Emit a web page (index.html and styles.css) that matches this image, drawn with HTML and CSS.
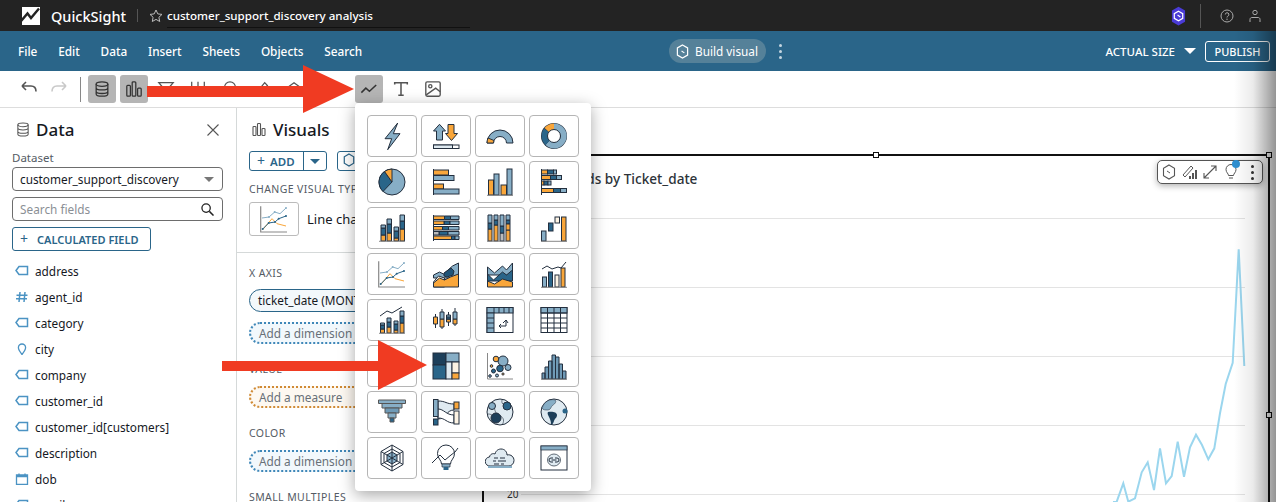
FILE: index.html
```html
<!DOCTYPE html>
<html lang="en">
<head>
  <meta charset="UTF-8">
  <title>QuickSight - customer_support_discovery analysis</title>
  <link rel="stylesheet" href="styles.css">
</head>
<body>
  <header class="top-bar">
    <svg class="logo" viewBox="0 0 18 18"><path fill="#fff" d="M0 0h18v18H0z"/><path fill="none" stroke="#232323" stroke-width="2.400" d="M-1 14l6.500-7.500L9 11l8-9.500"/></svg>
    <span class="brand">QuickSight</span>
    <span class="top-divider"></span>
    <svg class="star" viewBox="0 0 14 14"><path fill="none" stroke="#bbb" d="M7 1l1.800 3.900 4.200.5-3.100 2.900.8 4.200L7 10.400l-3.700 2.100.8-4.200L1 5.400l4.200-.5z"/></svg>
    <span class="analysis-name">customer_support_discovery analysis</span>
    <span class="top-right">
      <svg class="q-badge" viewBox="0 0 16 20"><path fill="#4a3bd6" d="M8 0l7 4v12l-7 4-7-4V4z"/><path fill="none" stroke="#fff" stroke-width="1.300" d="M8 5l4.500 2.500v5L8 15l-4.500-2.500v-5z"/><path stroke="#fff" stroke-width="1.200" d="M7 9l3 2"/></svg>
      <span class="top-divider tall"></span>
      <svg class="top-icon" viewBox="0 0 14 14"><circle cx="7" cy="7" r="6" fill="none" stroke="#aaa"/><path fill="none" stroke="#aaa" d="M5.300 5.500a1.800 1.800 0 1 1 2.500 1.700c-.6.300-.8.600-.8 1.300"/><circle cx="7" cy="10.300" r=".7" fill="#aaa"/></svg>
      <svg class="top-icon" viewBox="0 0 14 14"><circle cx="7" cy="3.500" r="2.200" fill="none" stroke="#aaa"/><path fill="none" stroke="#aaa" d="M2 13v-2.500c0-1.500 1-2 2-2h6c1 0 2 .5 2 2V13"/></svg>
    </span>
  </header>

  <nav class="menu-bar">
    <span class="menu-item">File</span>
    <span class="menu-item">Edit</span>
    <span class="menu-item">Data</span>
    <span class="menu-item">Insert</span>
    <span class="menu-item">Sheets</span>
    <span class="menu-item">Objects</span>
    <span class="menu-item">Search</span>
    <span class="build-pill">
      <svg viewBox="0 0 14 16"><path fill="none" stroke="#fff" stroke-width="1.300" d="M7 1l5.500 3.200v7.600L7 15l-5.500-3.200V4.200z"/><path stroke="#fff" stroke-width="1.200" d="M6 7.500l3 2"/></svg>
      Build visual
    </span>
    <span class="kebab"><i></i><i></i><i></i></span>
    <span class="size-label">ACTUAL SIZE</span>
    <span class="caret-white"></span>
    <span class="publish">PUBLISH</span>
  </nav>

  <div class="toolbar">
    <svg class="tool first" viewBox="0 0 24 24"><path fill="none" stroke="#555" stroke-width="1.600" d="M6 9h9c3.500 0 5 2.200 5 5.500M6 9l4-4M6 9l4 4"/></svg>
    <svg class="tool" viewBox="0 0 24 24"><path fill="none" stroke="#c9c9c9" stroke-width="1.600" d="M18 9H9c-3.500 0-5 2.200-5 5.500M18 9l-4-4M18 9l-4 4"/></svg>
    <span class="tool-divider"></span>
    <span class="tool-btn on"><svg viewBox="0 0 20 20"><g fill="none" stroke="#333" stroke-width="1.400"><ellipse cx="10" cy="4.500" rx="6.500" ry="2.500"/><path d="M3.500 4.500v11c0 1.400 3 2.500 6.500 2.500s6.500-1.100 6.500-2.500v-11M3.500 8.500c0 1.400 3 2.500 6.500 2.500s6.500-1.100 6.500-2.500M3.500 12.500c0 1.400 3 2.500 6.500 2.500s6.500-1.100 6.500-2.500"/></g></svg></span>
    <span class="tool-btn on"><svg viewBox="0 0 20 20"><g fill="none" stroke="#333" stroke-width="1.400"><rect x="2" y="6" width="4" height="12" rx="1"/><rect x="8" y="2" width="4" height="16" rx="1"/><rect x="14" y="9" width="4" height="9" rx="1"/></g></svg></span>
    <span class="tool-btn"><svg viewBox="0 0 20 20"><path fill="none" stroke="#555" stroke-width="1.400" d="M2 3h16l-6 7v7l-4-2v-5z"/></svg></span>
    <span class="tool-btn"><svg viewBox="0 0 20 20"><path stroke="#555" stroke-width="1.400" d="M3 2v14M10 2v14M17 2v14"/></svg></span>
    <span class="tool-btn"><svg viewBox="0 0 20 20"><circle cx="10" cy="8" r="6" fill="none" stroke="#555" stroke-width="1.400"/><path fill="none" stroke="#555" stroke-width="1.400" d="M7 15h6v3H7z"/></svg></span>
    <span class="tool-btn"><svg viewBox="0 0 20 20"><path fill="none" stroke="#555" stroke-width="1.400" d="M4 14L13 3l3 3-9 10zM3 18h14"/></svg></span>
    <span class="tool-btn"><svg viewBox="0 0 20 20"><path fill="none" stroke="#555" stroke-width="1.400" d="M10 3l8 6-8 6-8-6z"/></svg></span>
    <span class="tool-btn on line-tool"><svg viewBox="0 0 20 20"><path fill="none" stroke="#333" stroke-width="1.700" d="M1.500 14l5-5 4 3.500 7.500-7"/></svg></span>
    <span class="tool-btn"><svg viewBox="0 0 20 20"><path fill="none" stroke="#555" stroke-width="1.700" d="M3 5V3h14v2M10 3v14M7 17h6"/></svg></span>
    <span class="tool-btn"><svg viewBox="0 0 20 20"><g fill="none" stroke="#555" stroke-width="1.500"><rect x="2" y="2" width="16" height="16" rx="1.500"/><circle cx="7" cy="7" r="1.800"/><path d="M2.500 16.500L13 9l5 4"/></g></svg></span>
  </div>

  <main class="workspace">
    <aside class="data-panel">
      <div class="panel-head">
        <svg class="head-icon" viewBox="0 0 14 16"><g fill="none" stroke="#555" stroke-width="1.100"><ellipse cx="7" cy="3" rx="5.500" ry="2"/><path d="M1.500 3v10c0 1.100 2.500 2 5.500 2s5.500-.9 5.500-2V3M1.500 6.500c0 1.100 2.500 2 5.500 2s5.500-.9 5.500-2M1.500 10c0 1.100 2.500 2 5.500 2s5.500-.9 5.500-2"/></g></svg>
        <h2>Data</h2>
        <svg class="close" viewBox="0 0 12 12"><path stroke="#555" stroke-width="1.100" d="M.5.5l11 11M11.500.5l-11 11"/></svg>
      </div>
      <label class="field-label">Dataset</label>
      <div class="select-box">customer_support_discovery<span class="caret-grey"></span></div>
      <div class="search-box">Search fields
        <svg viewBox="0 0 14 14"><circle cx="5.500" cy="5.500" r="4.500" fill="none" stroke="#222" stroke-width="1.400"/><path stroke="#222" stroke-width="1.600" d="M9 9l4.500 4.500"/></svg>
      </div>
      <div class="calc-btn"><span class="plus">+</span>CALCULATED FIELD</div>
      <ul class="field-list">
        <li><svg viewBox="0 0 14 12"><use href="#tag-icon"/></svg>address</li>
        <li><svg viewBox="0 0 14 12"><use href="#hash-icon"/></svg>agent_id</li>
        <li><svg viewBox="0 0 14 12"><use href="#tag-icon"/></svg>category</li>
        <li><svg viewBox="0 0 14 12"><use href="#pin-icon"/></svg>city</li>
        <li><svg viewBox="0 0 14 12"><use href="#tag-icon"/></svg>company</li>
        <li><svg viewBox="0 0 14 12"><use href="#tag-icon"/></svg>customer_id</li>
        <li><svg viewBox="0 0 14 12"><use href="#tag-icon"/></svg>customer_id[customers]</li>
        <li><svg viewBox="0 0 14 12"><use href="#tag-icon"/></svg>description</li>
        <li><svg viewBox="0 0 14 12"><use href="#cal-icon"/></svg>dob</li>
        <li><svg viewBox="0 0 14 12"><use href="#tag-icon"/></svg>email</li>
      </ul>
    </aside>

    <section class="visuals-panel">
      <div class="panel-head visuals-head">
        <svg class="head-icon" viewBox="0 0 14 14"><g fill="none" stroke="#555" stroke-width="1.100"><rect x="1" y="4" width="3" height="9" rx=".8"/><rect x="5.500" y="1" width="3" height="12" rx=".8"/><rect x="10" y="6" width="3" height="7" rx=".8"/></g></svg>
        <h2>Visuals</h2>
      </div>
      <div class="add-row">
        <span class="add-btn"><span class="add-main"><span class="plus">+</span>ADD</span><span class="add-drop"><i></i></span></span>
        <span class="q-btn"><svg viewBox="0 0 14 16"><path fill="none" stroke="#2a6589" stroke-width="1.400" d="M7 1l5.500 3.200v7.600L7 15l-5.500-3.200V4.200z"/></svg></span>
      </div>
      <div class="well-label change-label">CHANGE VISUAL TYPE</div>
      <div class="type-row">
        <span class="type-thumb"><svg viewBox="0 0 30 30"><use href="#line-chart-icon"/></svg></span>
        <span class="type-name">Line chart</span>
      </div>
      <div class="well-group">
        <div class="well-label">X AXIS</div>
        <div class="pill solid">ticket_date (MONTH)</div>
        <div class="pill dotted">Add a dimension</div>
        <div class="well-label">VALUE</div>
        <div class="pill dotted measure">Add a measure</div>
        <div class="well-label">COLOR</div>
        <div class="pill dotted">Add a dimension</div>
        <div class="well-label">SMALL MULTIPLES</div>
      </div>
    </section>

    <section class="canvas">
      <div class="visual-frame">
        <span class="handle h-top"></span>
        <span class="handle h-corner"></span>
        <span class="handle h-right"></span>
        <h3 class="visual-title">Count of Records by Ticket_date</h3>
        <div class="visual-tools">
          <svg viewBox="0 0 14 16"><path fill="none" stroke="#555" stroke-width="1.100" d="M7 1l5.500 3.200v7.600L7 15l-5.500-3.200V4.200z"/><path stroke="#555" d="M5 7l3 2"/></svg>
          <svg viewBox="0 0 16 16"><path fill="none" stroke="#555" d="M1 11L9 2l2 2-8 9z"/><path fill="#555" d="M7 15v-3h2v3zM10 15V9h2v6zM13 15V6h2v9z"/></svg>
          <svg viewBox="0 0 16 16"><path fill="none" stroke="#555" stroke-width="1.100" d="M2 14L14 2M9 2h5v5M2 9v5h5"/></svg>
          <svg viewBox="0 0 14 16"><path fill="none" stroke="#555" d="M4.500 11.500c0-2-2.500-3-2.500-6a5 5 0 0 1 10 0c0 3-2.500 4-2.500 6zM5 14h4"/></svg>
          <span class="tip-dot"></span>
          <span class="kebab dark"><i></i><i></i><i></i></span>
        </div>
        <svg class="chart" viewBox="0 0 786 346" preserveAspectRatio="none">
          <g stroke="#e3e3e3" stroke-width="1">
            <path d="M0 62.500H761M37 131.500H761M37 200.500H761M37 269.500H761M37 338.500H761"/>
          </g>
          <text x="23" y="342" class="tick">20</text>
          <path fill="none" stroke="#9bd6ee" stroke-width="2" d="M629 346L632.700 345.700 639.300 327.300 644.300 345.700 651 342.300 657.700 316.300 663.700 306.300 670 334 676 292.300 682 327.300 687.700 320 693.700 285.700 700 320.700 706 291.300 712 278.700 718 289 724.300 303.300 730.300 292.300 736 257.300 741.700 228 748.700 206.700 754.700 93.300 760.300 210"/>
        </svg>
      </div>
    </section>
  </main>

  <!-- visual type picker -->
  <div class="picker">
    <span class="cell"><svg viewBox="0 0 30 30"><path fill="#87aec6" stroke="#232f3e" d="M20.700 2L8 17.700h6.700L10.700 28.700 23 12.700h-6.700z"/></svg></span>
    <span class="cell"><svg viewBox="0 0 30 30"><g stroke="#232f3e"><path fill="#87aec6" d="M8.500 3.300L2.500 10H5.500v9H11.500v-9H14.500z"/><path fill="#f9a63a" d="M17 3.500h6v9h3.500l-6 7-6-7H17z"/><rect x="2.500" y="24" width="25.500" height="3.500" fill="#fff"/><rect x="2.500" y="24" width="19" height="3.500" fill="#dfeaf1"/></g></svg></span>
    <span class="cell"><svg viewBox="0 0 30 30"><g stroke="#232f3e"><path fill="#87aec6" d="M2 22A13 13 0 0 1 28 22H21.500A6.500 6.500 0 0 0 8.500 22z"/><path fill="#f9a63a" d="M2 22A13 13 0 0 1 3 17L9 19.500A6.500 6.500 0 0 0 8.500 22z"/></g></svg></span>
    <span class="cell"><svg viewBox="0 0 30 30"><circle cx="15" cy="15" r="13" fill="#232f3e"/><path fill="#87aec6" d="M15 2.500A12.500 12.500 0 1 1 6.500 24L11 19A6 6 0 1 0 15 9z"/><path fill="#2a6589" d="M6.500 24A12.500 12.500 0 0 1 5 7.500L10 11A6 6 0 0 0 11 19z"/><path fill="#f9a63a" d="M5.500 7A12.500 12.500 0 0 1 15 2.500V9A6 6 0 0 0 10 11z"/><circle cx="15" cy="15" r="6.500" fill="#fff" stroke="#232f3e"/></svg></span>

    <span class="cell"><svg viewBox="0 0 30 30"><g stroke="#232f3e"><circle cx="15" cy="15" r="13" fill="#87aec6"/><path fill="#2a6589" d="M15 15L7.500 4.500A13 13 0 0 0 6 24.500z"/><path fill="#f9a63a" d="M15 15V2A13 13 0 0 0 7.500 4.500z"/></g></svg></span>
    <span class="cell"><svg viewBox="0 0 30 30"><g stroke="#232f3e" stroke-width=".8"><rect x="2.500" y="3" width="15" height="5" fill="#f9a63a"/><rect x="2.500" y="8.500" width="20.500" height="5" fill="#87aec6"/><rect x="2.500" y="17" width="10" height="5" fill="#f9a63a"/><rect x="2.500" y="22" width="25.500" height="5" fill="#87aec6"/></g><path stroke="#232f3e" d="M2.500 2v26"/></svg></span>
    <span class="cell"><svg viewBox="0 0 30 30"><g stroke="#232f3e" stroke-width=".8"><rect x="3.500" y="13" width="5" height="15" fill="#f9a63a"/><rect x="9" y="7" width="5" height="21" fill="#87aec6"/><rect x="16" y="18" width="5.500" height="10" fill="#f9a63a"/><rect x="22" y="2" width="5" height="26" fill="#87aec6"/></g><path stroke="#888" d="M2 28.300h26"/></svg></span>
    <span class="cell"><svg viewBox="0 0 30 30"><g stroke="#232f3e" stroke-width=".7"><rect x="2.500" y="3" width="6" height="4" fill="#f9a63a"/><rect x="8.500" y="3" width="6" height="4" fill="#2a6589"/><rect x="14.500" y="3" width="3" height="4" fill="#87aec6"/><rect x="2.500" y="8.500" width="9" height="4" fill="#f9a63a"/><rect x="11.500" y="8.500" width="6" height="4" fill="#2a6589"/><rect x="17.500" y="8.500" width="5" height="4" fill="#87aec6"/><rect x="2.500" y="14" width="2.500" height="4" fill="#f9a63a"/><rect x="5" y="14" width="4" height="4" fill="#2a6589"/><rect x="9" y="14" width="3" height="4" fill="#87aec6"/><rect x="2.500" y="21.500" width="12" height="4" fill="#f9a63a"/><rect x="14.500" y="21.500" width="7" height="4" fill="#2a6589"/><rect x="21.500" y="21.500" width="6" height="4" fill="#87aec6"/></g><path stroke="#232f3e" d="M2.500 2v26"/></svg></span>

    <span class="cell"><svg viewBox="0 0 30 30"><g stroke="#232f3e" stroke-width=".7"><path fill="#f9a63a" d="M4 22h4.500v6H4zM10 20h4.500v8H10zM17 25h4.500v3H17zM23 16h4.500v12H23z"/><path fill="#2a6589" d="M4 15h4.500v7H4zM10 11h4.500v9H10zM17 18h4.500v7H17zM23 8h4.500v8H23z"/><path fill="#87aec6" d="M4 12h4.500v3H4zM10 6h4.500v5H10zM17 14h4.500v4H17zM23 2h4.500v6H23z"/></g><path stroke="#888" d="M2 28.300h26"/></svg></span>
    <span class="cell"><svg viewBox="0 0 30 30"><g stroke="#232f3e" stroke-width=".7"><path fill="#f9a63a" d="M2.500 3h11v3.500h-11zM2.500 13.500h9V17h-9zM2.500 23h18v3.500h-18z"/><path fill="#2a6589" d="M13.500 3h6v3.500h-6zM13 8h6v3.500h-6zM11.500 13.500h6V17h-6zM8 18.500h9V22H8zM20.500 23h3.500v3.500h-3.500z"/><path fill="#87aec6" d="M19.500 3h8.500v3.500h-8.500zM19 8h9v3.500h-9zM17.500 13.500H28V17H17.500zM17 18.500h11V22H17zM24 23h4v3.500h-4z"/><path fill="#f9a63a" d="M2.500 8H13v3.500H2.500z"/><path fill="#bbb" d="M2.500 18.500H8V22H2.500z"/></g><path stroke="#232f3e" d="M2.500 2v26"/></svg></span>
    <span class="cell"><svg viewBox="0 0 30 30"><g stroke="#232f3e" stroke-width=".7"><path fill="#f9a63a" d="M3 16h4v12H3zM9 12h4v16H9zM21 17h4v11h-4z"/><path fill="#bbb" d="M15 20h4v8h-4z"/><path fill="#2a6589" d="M3 10h4v6H3zM9 7h4v5H9zM15 13h4v7h-4zM21 7h4v4h-4z"/><path fill="#87aec6" d="M3 2h4v8H3zM9 2h4v5H9zM15 2h4v11h-4zM21 2h4v5h-4z"/><path fill="#f9a63a" d="M21 11h4v6h-4z"/></g><path stroke="#888" d="M2 28.300h24"/></svg></span>
    <span class="cell"><svg viewBox="0 0 30 30"><g stroke="#232f3e" stroke-width=".8"><rect x="2.500" y="18" width="4.500" height="10" fill="#87aec6"/><rect x="9.500" y="10" width="4.500" height="8" fill="#2a6589"/><rect x="16" y="4" width="4.500" height="6" fill="#fdf3e3"/><rect x="22.500" y="4" width="4.500" height="24" fill="#f9a63a"/></g><path stroke="#888" d="M2 28.300h26"/></svg></span>

    <span class="cell"><svg viewBox="0 0 30 30"><use href="#line-chart-icon"/></svg></span>
    <span class="cell"><svg viewBox="0 0 30 30"><g stroke="#232f3e" stroke-width=".8"><path fill="#87aec6" d="M2.500 16l6-3 4 2 9-8 6-3v15H2.500z"/><path fill="#fdf3e3" d="M2.500 23l5-6 6 2v9H2.500z"/><path fill="#1f5478" d="M13 14l7-5 3 3-1 4-6 2-3-1z"/><path fill="#f9a63a" d="M2.500 28v-4l6-5 5 2 6-3 8-3v13z"/></g></svg></span>
    <span class="cell"><svg viewBox="0 0 30 30"><g stroke="#232f3e" stroke-width=".8"><path fill="#87aec6" d="M2.500 8l7 6 8-7 4 4 6-7v12H2.500z"/><path fill="#2a6589" d="M2.500 15l6 6 9-8 4 3 6-5v11H2.500z"/><path fill="#f9a63a" d="M2.500 22l7 3 8-5 10 3v5H2.500z"/></g></svg></span>
    <span class="cell"><svg viewBox="0 0 30 30"><g stroke="#232f3e" stroke-width=".8"><rect x="3.500" y="18" width="4" height="10" fill="#87aec6"/><rect x="9.500" y="13" width="4" height="15" fill="#2a6589"/><rect x="16" y="16" width="4" height="12" fill="#fdf3e3"/><rect x="22" y="9" width="4" height="19" fill="#f9a63a"/></g><path fill="none" stroke="#232f3e" d="M3 10l5-3 5 3 6-2 3 1 5-6"/><path stroke="#888" d="M2 28.300h26"/></svg></span>

    <span class="cell"><svg viewBox="0 0 30 30"><g stroke="#232f3e" stroke-width=".7"><path fill="#f9a63a" d="M3.500 24h4v4h-4zM10 22h4v6h-4zM17 25h4v3h-4zM23 18h4v10h-4z"/><path fill="#2a6589" d="M3.500 20h4v4h-4zM10 17h4v5h-4zM17 19h4v6h-4zM23 11h4v7h-4z"/><path fill="#87aec6" d="M3.500 18h4v2h-4zM10 13h4v4h-4zM17 16h4v3h-4zM23 6h4v5h-4z"/></g><path fill="none" stroke="#232f3e" d="M3 11l7-5 5 2 10-6"/><path stroke="#888" d="M2 28.300h26"/></svg></span>
    <span class="cell"><svg viewBox="0 0 30 30"><g stroke="#232f3e" stroke-width=".7"><path d="M4.500 9v14M11 4v20M17.500 7v14M24 3v18"/><path fill="#f9a63a" d="M2.500 12h4v7h-4zM9 14h4v8H9zM15.500 14h4v3h-4zM22 14h4v5h-4z"/><path fill="#87aec6" d="M9 7h4v7H9zM15.500 10h4v4h-4zM22 7h4v7h-4z"/><path fill="#2a6589" d="M15.500 12h4v2h-4z"/></g></svg></span>
    <span class="cell"><svg viewBox="0 0 30 30"><g stroke="#232f3e" stroke-width=".8"><rect x="2" y="2.500" width="26" height="25" fill="#fff"/><rect x="2" y="2.500" width="26" height="5.500" fill="#87aec6"/><rect x="2" y="8" width="7" height="19.500" fill="#87aec6"/><path d="M9 2.500v5.500M14 2.500V8M19 2.500V8M24 2.500V8M2 13h7M2 18h7M2 23h7"/><path fill="none" d="M14 21h7v-6M18 18l3-3 2 3M14 21l2-2M14 21l2 2"/></g></svg></span>
    <span class="cell"><svg viewBox="0 0 30 30"><g stroke="#232f3e" stroke-width=".8"><rect x="2" y="2.500" width="26" height="25" fill="#fff"/><rect x="2" y="2.500" width="26" height="5.500" fill="#87aec6"/><path d="M8.500 2.500v25M15 2.500v25M21.500 2.500v25M2 8h26M2 13h26M2 18h26M2 23h26"/></g></svg></span>

    <span class="cell"></span>
    <span class="cell"><svg viewBox="0 0 30 30"><g stroke="#232f3e" stroke-width=".8"><rect x="2" y="2" width="13" height="12" fill="#1d3f5a"/><rect x="2" y="14" width="13" height="14" fill="#2a6589"/><rect x="15" y="2" width="13" height="9" fill="#87aec6"/><rect x="15" y="11" width="6" height="17" fill="#dfeaf1"/><rect x="21" y="11" width="7" height="11" fill="#fdf3e3"/><rect x="21" y="22" width="7" height="6" fill="#f9a63a"/></g></svg></span>
    <span class="cell"><svg viewBox="0 0 30 30"><path fill="none" stroke="#888" d="M2.500 2v26H28"/><g stroke="#232f3e" stroke-width=".7"><circle cx="18" cy="10" r="5" fill="#87aec6"/><circle cx="11" cy="8" r="2.800" fill="#f9a63a"/><circle cx="15" cy="17.500" r="3.300" fill="#2a6589"/><circle cx="23" cy="16.500" r="3" fill="#87aec6"/><circle cx="6.500" cy="15" r="1.300" fill="#f9a63a"/><circle cx="8.500" cy="20" r="2" fill="#2a6589"/><circle cx="5" cy="25" r="1.300" fill="#87aec6"/><circle cx="12" cy="24.500" r="1.500" fill="#87aec6"/><circle cx="18" cy="23" r="1.100" fill="#f9a63a"/></g></svg></span>
    <span class="cell"><svg viewBox="0 0 30 30"><g stroke="#232f3e" stroke-width=".7" fill="#6f9ab6"><path d="M3 22h3v6H3zM6 16h3.500v12H6zM9.500 10h3.500v18H9.500zM13 4h3.500v24H13zM16.500 6H20v22h-3.500zM20 13h3.500v15H20zM23.500 20H27v8h-3.500z"/></g><path stroke="#888" d="M2 28.300h26"/></svg></span>

    <span class="cell"><svg viewBox="0 0 30 30"><g stroke="#555" stroke-width=".6" fill="#87aec6"><path d="M1.500 3h27v3.500h-27z"/><path d="M5 6.500h20V11H5z"/><path fill="#6f9ab6" d="M8 11h14v5H8z"/><path d="M11 16h8v5h-8z"/><path fill="#2a6589" d="M13 21h4v4h-4z"/></g></svg></span>
    <span class="cell"><svg viewBox="0 0 30 30"><g stroke="#232f3e" stroke-width=".8"><path fill="#dfeaf1" d="M7 4c8 0 8 3 16 3v6c-8 0-8 9-16 9z"/><path fill="#fff" d="M7 12c6 0 8 6 16 6v8c-8 0-8-5-16-5z"/><rect x="2.500" y="2.500" width="4.500" height="17" fill="#87aec6"/><rect x="2.500" y="22" width="4.500" height="6" fill="#2a6589"/><rect x="23" y="5" width="5" height="7" fill="#f9a63a"/><rect x="23" y="14" width="5" height="13" fill="#fdf3e3"/></g></svg></span>
    <span class="cell"><svg viewBox="0 0 30 30"><circle cx="15" cy="15" r="13" fill="#dfeaf1" stroke="#232f3e"/><path fill="none" stroke="#232f3e" stroke-width=".6" d="M7 5c4 6 1 10 7 13s5 7 3 10M17 3c-1 5 3 6 8 4M3 17c5 0 7 3 6 9"/><g stroke="#232f3e" stroke-width=".6"><circle cx="7" cy="9" r="3.500" fill="#87aec6"/><circle cx="22" cy="9" r="4" fill="#2a6589"/><circle cx="11" cy="21" r="5" fill="#1d3f5a"/></g></svg></span>
    <span class="cell"><svg viewBox="0 0 30 30"><circle cx="15" cy="15" r="13" fill="#dfeaf1" stroke="#232f3e"/><path fill="#87aec6" stroke="#232f3e" stroke-width=".5" d="M5 7c3-4 8-5 11-4 2 1 0 4-2 5s-2 5-5 5-5 0-6-2z"/><path fill="#1d3f5a" d="M9 15c4-1 9 0 9 3s-2 3-3 6-2 4-3 3c0-3-1-5-2-7s-2-4-1-5z"/><circle cx="26" cy="14" r="2.500" fill="#2a6589"/></svg></span>

    <span class="cell"><svg viewBox="0 0 30 30"><g stroke="#232f3e" stroke-width=".7" fill="none"><path d="M15 2l11 6.500v13L15 28 4 21.500v-13z"/><path d="M15 6l8 4.500v9L15 24l-8-4.500v-9z"/><path fill="#87aec6" d="M15 9l5 3v6l-5 3-5-3v-6z"/><path d="M15 2v26M4 8.500l22 13M26 8.500l-22 13"/></g></svg></span>
    <span class="cell"><svg viewBox="0 0 30 30"><path fill="#fff" stroke="#232f3e" d="M10.500 21c0-4-4-5.500-4-10.500a8.500 8.500 0 0 1 17 0c0 5-4 6.500-4 10.500z"/><path fill="#87aec6" stroke="#232f3e" stroke-width=".7" d="M11 21h8v3h-8z"/><path fill="#2a6589" d="M12.500 24h5v3h-5z"/><path fill="none" stroke="#232f3e" d="M1 20l8-8 5 5 6-5 4-3 3-4"/></svg></span>
    <span class="cell"><svg viewBox="0 0 30 30"><path fill="#dfeaf1" stroke="#232f3e" d="M5 23a4.500 4.500 0 0 1-.5-9C5 11 8 10 10 11c1-4 4-5 6-5 4 0 6 3 6 6 4-1 7 2 7 5.500S26 23 24 23z"/><path fill="#87aec6" d="M3 23h24v2H3z"/><path stroke="#232f3e" d="M9 15h4M15 15h5M8 18h3M13 18h8M9 21h5M16 21h3"/></svg></span>
    <span class="cell"><svg viewBox="0 0 30 30"><rect x="2" y="3" width="26" height="24" fill="#fff" stroke="#232f3e"/><rect x="2" y="3" width="26" height="4" fill="#87aec6" stroke="#232f3e" stroke-width=".7"/><ellipse cx="15" cy="17" rx="6.500" ry="6" fill="#dfeaf1" stroke="#232f3e" stroke-width=".7"/><path fill="none" stroke="#232f3e" d="M14 15h-2a2 2 0 0 0 0 4h2M16 15h2a2 2 0 0 1 0 4h-2M12.500 17h5"/></svg></span>
  </div>

  <div class="edge-shadow"></div>

  <svg class="arrow arrow-top" viewBox="0 0 208 50"><path fill="#f03b22" d="M0 21h156V0l51 24-51 24V32H0z"/></svg>
  <svg class="arrow arrow-mid" viewBox="0 0 206 50"><path fill="#f03b22" d="M0 21h156V0l49 25-49 25V31H0z"/></svg>

  <svg class="icon-defs" aria-hidden="true">
    <defs>
      <path id="tag-icon" fill="none" stroke="#4b93c3" stroke-width="1.500" d="M4 1.500h8.500v8H4L1 5.500z"/>
      <path id="hash-icon" fill="none" stroke="#4b93c3" stroke-width="1.500" d="M5 1L4 11M10 1L9 11M1.500 4.200h11M1 7.800h11"/>
      <path id="pin-icon" fill="none" stroke="#4b93c3" stroke-width="1.300" d="M7 11.500C5 9 3.400 7 3.400 4.600a3.600 3.600 0 0 1 7.200 0C10.600 7 9 9 7 11.500z"/>
      <path id="cal-icon" fill="none" stroke="#4b93c3" stroke-width="1.300" d="M1.500 2h11v9.500h-11zM1.500 3.500h11M4 .5v2M10 .5v2"/>
      <g id="line-chart-icon">
        <path fill="none" stroke="#888" stroke-width="1.200" d="M1.700 2.300V28H28"/>
        <path fill="none" stroke="#87aec6" d="M3 14l7-1 5.700-5 5.300 1.700L27 4"/>
        <path fill="none" stroke="#f9a63a" d="M3.700 25.700L13 14.700l5 5 9 2.300"/>
        <path fill="none" stroke="#2a6589" d="M3.700 25l6-6 6.300-1 3.700-3.300L27 12"/>
        <g fill="#2a6589"><circle cx="3.700" cy="25" r="1"/><circle cx="9.700" cy="19" r="1"/><circle cx="16" cy="18" r="1"/><circle cx="19.700" cy="14.700" r="1"/><circle cx="27" cy="12" r="1"/></g>
        <g fill="#87aec6"><circle cx="10" cy="13" r="1"/><circle cx="15.700" cy="8" r="1"/><circle cx="27" cy="4" r="1"/></g>
      </g>
    </defs>
  </svg>
</body>
</html>
```

FILE: styles.css
```css
* {
  box-sizing: border-box;
}

html, body {
  height: 502px;
  overflow: hidden;
}

body {
  margin: 0;
  position: relative;
  font-family: "Noto Sans", "Open Sans", sans-serif;
  font-size: 11.800px;
  color: #16191f;
  background: #fff;
}

/* top bar */
.top-bar {
  height: 31px;
  background: #232323;
  color: #fff;
  display: flex;
  align-items: center;
  padding-left: 22px;
}

.logo {
  width: 18px;
  height: 18px;
  margin-right: 11px;
}

.brand {
  font-size: 14.500px;
  font-weight: 500;
  width: 86px;
}

.top-divider {
  width: 1px;
  height: 13px;
  background: #555;
}

.top-divider.tall {
  height: 24px;
  margin: 0 19px 0 14px;
}

.star {
  width: 14px;
  height: 14px;
  margin: 0 4px 0 11px;
}

.analysis-name {
  font-size: 11.600px;
  font-weight: 500;
  width: 303px;
  height: 25px;
  line-height: 25px;
  border-bottom: 1px solid #111;
}

.top-right {
  margin-left: auto;
  display: flex;
  align-items: center;
  padding-right: 14px;
}

.q-badge {
  width: 15px;
  height: 20px;
}

.top-icon {
  width: 14px;
  height: 14px;
  margin-right: 14px;
}

.top-icon:last-child {
  margin-right: 0;
}

/* menu bar */
.menu-bar {
  height: 40px;
  background: #2a6589;
  color: #fff;
  display: flex;
  align-items: center;
  padding-left: 18px;
  font-size: 11.800px;
  font-weight: 500;
}

.menu-item {
  margin-right: 20.800px;
}

.build-pill {
  margin-left: 286px;
  height: 24px;
  width: 97px;
  border-radius: 12px;
  background: #558199;
  display: flex;
  align-items: center;
  gap: 6px;
  padding-left: 7px;
  font-size: 11.800px;
  font-weight: 400;
}

.build-pill svg {
  width: 13px;
  height: 15px;
}

.kebab {
  margin-left: 13px;
  display: flex;
  flex-direction: column;
  gap: 3px;
}

.kebab i {
  width: 3px;
  height: 3px;
  border-radius: 50%;
  background: #c5d6e1;
}

.size-label {
  margin-left: auto;
  font-size: 11.500px;
}

.caret-white {
  margin-left: 9px;
  border-left: 6px solid transparent;
  border-right: 6px solid transparent;
  border-top: 6px solid #fff;
}

.publish {
  margin: 0 6px 0 9px;
  width: 65px;
  height: 21px;
  line-height: 19px;
  text-align: center;
  border: 1px solid #fff;
  border-radius: 3px;
  font-size: 11px;
}

/* toolbar */
.toolbar {
  height: 37px;
  display: flex;
  align-items: center;
  padding-left: 16px;
  border-bottom: 1px solid #ddd;
}

.tool {
  width: 24px;
  height: 24px;
  margin-right: 8px;
}

.tool-divider {
  width: 1px;
  height: 25px;
  background: #888;
  margin-right: 7px;
}

.tool-btn {
  width: 28px;
  height: 28px;
  margin-right: 4px;
  border-radius: 3px;
  display: flex;
  align-items: center;
  justify-content: center;
}

.tool-btn svg {
  width: 18px;
  height: 18px;
}

.tool-btn.on {
  background: #b5b5b5;
}

.line-tool {
  margin-left: 43px;
}

/* body panels */
.workspace {
  height: 394px;
  display: flex;
}

.data-panel {
  width: 237px;
  flex: none;
  border-right: 1px solid #d5d9d9;
  padding: 0 13px 0 12px;
}

.panel-head {
  height: 43px;
  display: flex;
  align-items: center;
  padding-left: 4px;
}

.head-icon {
  width: 14px;
  height: 15px;
  margin-right: 6px;
}

.panel-head h2 {
  margin: 0;
  font-size: 17px;
  font-weight: 500;
}

.close {
  margin-left: auto;
  width: 12px;
  height: 12px;
  margin-right: 4px;
}

.field-label {
  display: block;
  color: #545b64;
  font-size: 11.500px;
  line-height: 14px;
}

.select-box, .search-box {
  height: 24px;
  border: 1px solid #6d6d6d;
  border-radius: 4px;
  display: flex;
  align-items: center;
  padding-left: 7px;
  margin-bottom: 6px;
  justify-content: space-between;
  padding-right: 8px;
}

.select-box {
  margin-top: 2px;
}

.caret-grey {
  border-left: 5px solid transparent;
  border-right: 5px solid transparent;
  border-top: 5px solid #777;
}

.search-box {
  color: #8a8f95;
}

.search-box svg {
  width: 13px;
  height: 13px;
}

.calc-btn {
  width: 139px;
  height: 24px;
  border: 1px solid #2a6589;
  border-radius: 3px;
  color: #2a6589;
  font-size: 11px;
  font-weight: 600;
  line-height: 22px;
  padding-left: 7px;
  white-space: nowrap;
}

.calc-btn .plus {
  font-size: 14px;
  font-weight: 400;
  margin-right: 9px;
}

.field-list {
  list-style: none;
  margin: 7px 0 0;
  padding: 0;
}

.field-list li {
  height: 26px;
  display: flex;
  align-items: center;
  gap: 6px;
  padding-left: 3px;
}

.field-list svg {
  width: 14px;
  height: 12px;
}

.visuals-panel {
  width: 246px;
  flex: none;
  overflow: hidden;
}

.visuals-head {
  padding-left: 15px;
}

.visuals-head .head-icon {
  margin-right: 7px;
}

.add-row {
  display: flex;
  gap: 10px;
  padding-left: 12px;
}

.add-btn {
  width: 78px;
  height: 20px;
  border: 1px solid #2a6589;
  border-radius: 3px;
  display: flex;
  color: #2a6589;
  font-size: 11.500px;
  font-weight: 600;
}

.add-main {
  width: 54px;
  border-right: 1px solid #2a6589;
  line-height: 18px;
  padding-left: 7px;
}

.add-main .plus {
  font-size: 14px;
  font-weight: 400;
  margin-right: 5px;
}

.add-drop {
  flex: 1;
  display: flex;
  align-items: center;
  justify-content: center;
}

.add-drop i {
  border-left: 5px solid transparent;
  border-right: 5px solid transparent;
  border-top: 5px solid #2a6589;
}

.q-btn {
  width: 40px;
  height: 20px;
  border: 1px solid #2a6589;
  border-radius: 3px;
  padding-left: 5px;
}

.q-btn svg {
  width: 12px;
  height: 16px;
}

.well-label {
  font-size: 10.500px;
  line-height: 14px;
  color: #545b64;
  letter-spacing: .4px;
  padding-left: 12px;
  margin-top: 18px;
  white-space: nowrap;
}

.change-label {
  margin-top: 11px;
}

.type-row {
  display: flex;
  align-items: center;
  gap: 8px;
  padding: 6px 0 16px 12px;
  border-bottom: 1px solid #d5d9d9;
}

.type-thumb {
  width: 50px;
  height: 34px;
  border: 1px solid #bbb;
  border-radius: 3px;
  display: flex;
  align-items: center;
  justify-content: center;
}

.type-thumb svg {
  width: 30px;
  height: 30px;
}

.type-name {
  font-size: 13px;
  white-space: nowrap;
}

.well-group {
  padding-top: 13px;
}

.well-group .well-label:first-child {
  margin-top: 0;
}

.pill {
  margin: 10px 0 0 12px;
  width: 180px;
  height: 22px;
  border-radius: 12px;
  padding-left: 8px;
  white-space: nowrap;
}

.pill.solid {
  margin-top: 9px;
  height: 23px;
  line-height: 21px;
  border: 1px solid #2a6589;
  background: #f3f8fb;
}

.pill.dotted {
  border: 2px dotted #3f87b8;
  background: #f2f8fc;
  color: #687078;
  line-height: 18px;
}

.pill.measure {
  border-color: #d08a34;
  background: #fdf8f1;
}

/* canvas */
.canvas {
  flex: 1;
  padding: 46px 6px 0 0;
  min-width: 0;
  position: relative;
}

.visual-frame {
  position: relative;
  height: 380px;
  border: 2px solid #111;
  border-bottom: 0;
  margin-left: -1px;
  width: 788px;
}

.handle {
  position: absolute;
  width: 6px;
  height: 6px;
  background: #fff;
  border: 1px solid #111;
}

.h-top {
  top: -4px;
  left: 389px;
}

.h-corner {
  top: -4px;
  right: -4px;
}

.h-right {
  top: 256px;
  right: -4px;
}

.visual-title {
  margin: 13px 0 0 6px;
  font-size: 13.600px;
  font-weight: 500;
  line-height: 20px;
  color: #2d3339;
}

.visual-tools {
  position: absolute;
  top: 4px;
  right: 5px;
  width: 106px;
  height: 24px;
  background: #fff;
  border: 1px solid #555;
  border-radius: 5px;
  box-shadow: 0 2px 6px rgba(0, 0, 0, .3);
  display: flex;
  align-items: center;
  gap: 4.500px;
  padding-left: 3px;
}

.visual-tools svg {
  width: 16px;
  height: 16px;
}

.tip-dot {
  position: absolute;
  top: -1px;
  left: 74px;
  width: 8px;
  height: 8px;
  border-radius: 50%;
  background: #2f8fd0;
}

.kebab.dark {
  margin-left: 7.500px;
}

.kebab.dark i {
  background: #333;
}

.chart {
  display: block;
  width: 786px;
  height: 346px;
  position: absolute;
  left: 0;
  top: 0;
  z-index: -1;
}

.tick {
  font-size: 10px;
  fill: #333;
}

/* picker */
.picker {
  position: absolute;
  left: 355px;
  top: 103px;
  width: 236px;
  height: 388px;
  background: #fff;
  border-radius: 4px;
  box-shadow: 0 4px 16px rgba(0, 0, 0, .35);
  padding: 12px;
  display: grid;
  grid-template-columns: repeat(4, 50px);
  grid-auto-rows: 42px;
  gap: 4px;
}

.cell {
  border: 1px solid #b5b5b5;
  border-radius: 4px;
  display: flex;
  align-items: center;
  justify-content: center;
}

.cell svg {
  width: 30px;
  height: 30px;
}

.cell svg g {
  stroke-width: 1;
}

.edge-shadow {
  position: absolute;
  top: 31px;
  right: 0;
  width: 42px;
  height: 471px;
  background: linear-gradient(to right, rgba(0, 0, 0, 0), rgba(0, 0, 0, .08) 45%, rgba(0, 0, 0, .42));
  pointer-events: none;
}

/* annotation arrows */
.arrow {
  position: absolute;
  pointer-events: none;
}

.arrow-top {
  left: 147px;
  top: 65px;
  width: 208px;
  height: 50px;
}

.arrow-mid {
  left: 222px;
  top: 340px;
  width: 206px;
  height: 50px;
}

.icon-defs {
  position: absolute;
  width: 0;
  height: 0;
}
```
